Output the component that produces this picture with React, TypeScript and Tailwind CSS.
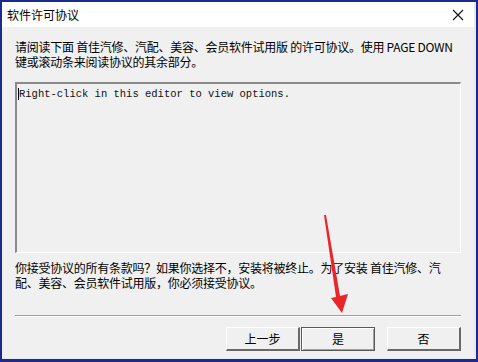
import React from "react";

const cjk = { fontFamily: '"Noto Sans CJK SC", "Liberation Sans", sans-serif' };

function Btn({ label, focused }: { label: string; focused?: boolean }) {
  return (
    <button
      className={
        "flex h-[24px] w-[74px] items-center justify-center bg-[#f0f0f0] text-[12px] leading-none text-black " +
        (focused
          ? "border border-[#5a5a5a] shadow-[inset_1px_1px_0_#ffffff,inset_-1px_-1px_0_#a0a0a0]"
          : "border-t border-l border-t-[#ffffff] border-l-[#ffffff] border-r-2 border-b-2 border-r-[#696969] border-b-[#696969]")
      }
      style={cjk}
    >
      {label}
    </button>
  );
}

export default function App() {
  return (
    <div className="relative h-[362px] w-[478px] overflow-hidden bg-[#1b2a8e] p-[2px] pb-[3px]" style={cjk}>
      <div className="flex h-full flex-col border-r-2 border-b border-r-[#e8e8ee] border-b-[#e8e8ee] bg-[#f0f0f0]">
        {/* title bar */}
        <div className="flex h-[25px] shrink-0 items-center justify-between bg-white pl-[5px] pr-[10px]">
          <span className="text-[12px] text-black">软件许可协议</span>
          <svg width="12" height="12" viewBox="0 0 12 12">
            <path d="M1 1 L11 11 M11 1 L1 11" stroke="#111" strokeWidth="1.1" />
          </svg>
        </div>

        <div className="flex flex-1 flex-col px-[13px]">
          <p className="mt-[12px] whitespace-nowrap text-[12px] leading-[15px] tracking-[-0.25px] text-black">
            请阅读下面 首佳汽修、汽配、美容、会员软件试用版 的许可协议。使用 PAGE DOWN
            <br />
            键或滚动条来阅读协议的其余部分。
          </p>

          {/* editor */}
          <div className="mt-[13px] h-[171px] shrink-0 border-t-2 border-l-2 border-t-[#8a8a8a] border-l-[#8a8a8a] border-r border-b border-r-[#ffffff] border-b-[#ffffff] bg-[#f0f0f0]">
            <div
              className="pl-[1px] pt-[4px] text-[10.5px] leading-[12px] text-[#111]"
              style={{ fontFamily: '"Liberation Mono", "DejaVu Sans Mono", monospace' }}
            >
              <span className="border-l border-black">Right-click in this editor to view options.</span>
            </div>
          </div>

          <p className="mt-[7px] whitespace-nowrap text-[12px] leading-[15px] tracking-[-0.25px] text-black">
            你接受协议的所有条款吗？如果你选择不，安装将被终止。为了安装 首佳汽修、汽
            <br />
            配、美容、会员软件试用版，你必须接受协议。
          </p>

          <div className="mt-[25px] border-t border-t-[#a0a0a0] border-b border-b-white" />

          <div className="mt-[10px] flex justify-end">
            <Btn label="上一步" />
            <div className="ml-[1px]">
              <Btn label="是" focused />
            </div>
            <div className="ml-[12px]">
              <Btn label="否" />
            </div>
          </div>
        </div>
      </div>

      {/* red annotation arrow */}
      <svg className="absolute left-0 top-0" width="478" height="362" viewBox="0 0 478 362">
        <polygon points="324,215 326,215 340,296 348,294 342,313 331,298 336,297" fill="#e8262a" />
      </svg>
    </div>
  );
}
